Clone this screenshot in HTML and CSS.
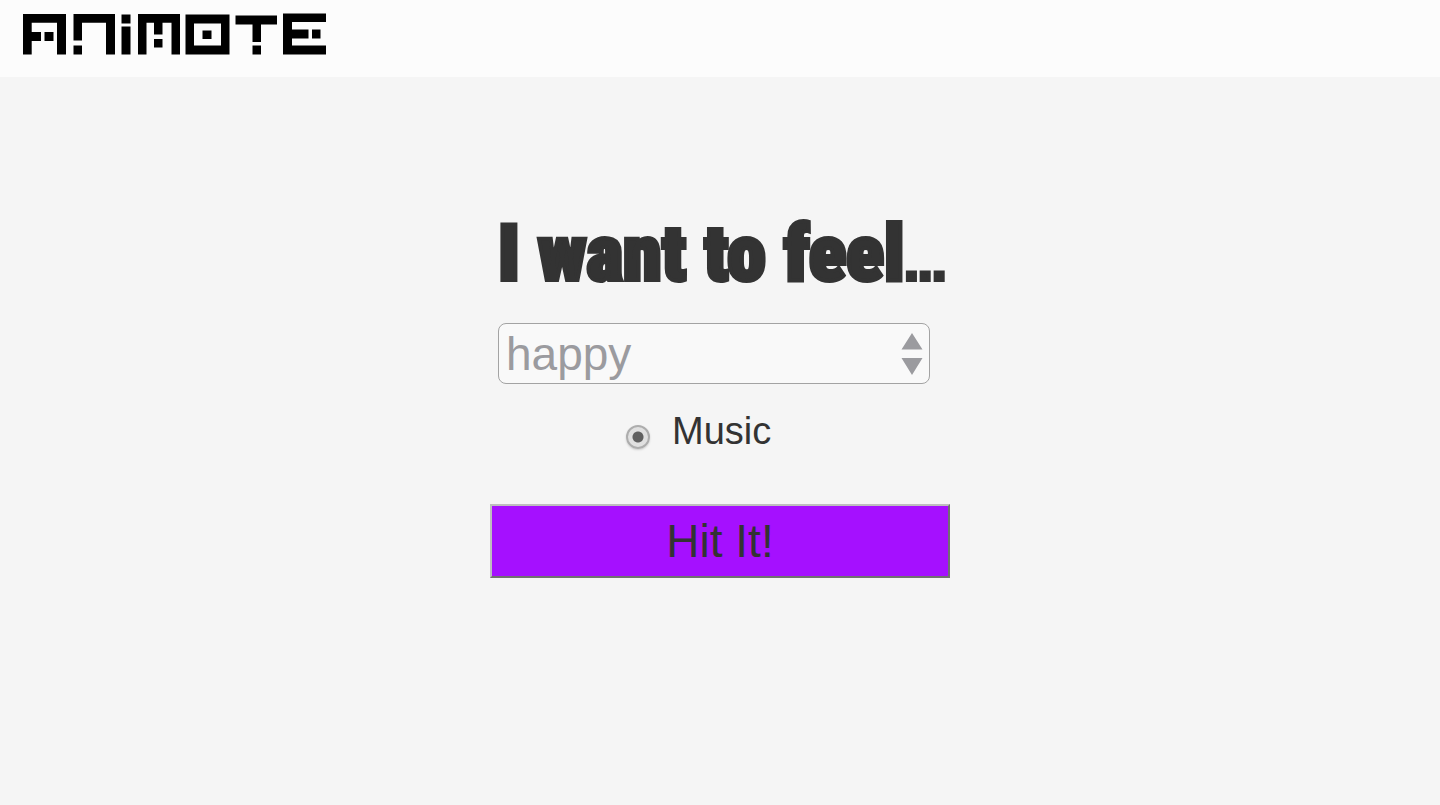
FILE: index.html
```html
<!DOCTYPE html>
<html lang="en">
<head>
<meta charset="utf-8">
<meta name="viewport" content="width=device-width, initial-scale=1">
<title>Animote</title>
<link rel="stylesheet" href="styles.css">
</head>
<body>
<header class="topbar">
  <svg class="logo" viewBox="22 13 305 42" role="img" aria-label="Animote">
    <path fill-rule="evenodd" d="M23 14H66V54.5H57V22.7H31.7V32H41V41H31.7V54.5H23ZM44.5 32h9v9h-9Z
      M73.5 14H115V54.5H106V22.7H82V40.5H73.5ZM73.5 45.5h8.5v9h-8.5Z
      M121.500 14.500h9v9h-9ZM121.500 26.500h9v28h-9Z
      M138 14H180V54.5H171.500V22.700H162.500V34.500H154V22.700H146.500V54.500H138ZM154 39h8.500v8.500h-8.500Z
      M185.500 14.500H229.500V54.500H185.500ZM194 23.500V45.500H221V23.500ZM202.500 30.500h9v8.500h-9Z
      M235.500 15.500H277V24.500H261V42H252.500V24.500H235.500ZM252.500 45.500h8.500v9h-8.500Z
      M283 13.500H326V22H292V29.500H308.500V38.500H292V45.500H326V54.500H283ZM312 29.500h8.500v9h-8.500Z"/>
  </svg>
</header>
<main class="content">
  <form class="mood-form">
    <h1 class="title"><label for="mood">I want to feel<span class="dots">...</span></label></h1>
    <div class="select-wrap">
      <select id="mood" class="mood-select">
        <option>happy</option>
      </select>
      <svg class="arrows" viewBox="0 0 22 42" aria-hidden="true"><path d="M11 0L21.500 16.500H.500ZM.500 25H21.500L11 42Z"/></svg>
    </div>
    <div class="choice">
      <input class="radio" type="radio" id="music" name="kind" checked>
      <label for="music">Music</label>
    </div>
    <button class="submit" type="button">Hit It!</button>
  </form>
</main>
</body>
</html>
```
FILE: styles.css
```css
* {
  box-sizing: border-box;
}

body {
  margin: 0;
  min-height: 100vh;
  background: #f5f5f5;
  color: #333;
  font-family: "Helvetica Neue", "Liberation Sans", Arial, sans-serif;
}

.topbar {
  padding: 13px 22px 22px;
  background: #fcfcfc;
}

.logo {
  display: block;
  width: 305px;
  height: 42px;
}

.content {
  display: flex;
  justify-content: center;
  padding: 129px 16px 48px;
}

.mood-form {
  display: flex;
  flex-direction: column;
  width: 460px;
}

.title {
  margin: 0 0 21px;
  padding-left: 8px;
  font: 900 78px/96px "Roboto Condensed", Impact, sans-serif;
  white-space: nowrap;
  -webkit-text-stroke: 4px #333;
}

.dots {
  font: bold 50px/50px "Liberation Sans", Arial, sans-serif;
}

.select-wrap {
  position: relative;
  margin: 0 20px 0 8px;
}

.mood-select {
  display: block;
  width: 100%;
  height: 61px;
  padding: 0 48px 0 7px;
  border: 1px solid #a3a3a3;
  border-radius: 8px;
  background: #f9f9f9;
  color: #9b9b9f;
  font: 46px/58px "Helvetica Neue", "Liberation Sans", Arial, sans-serif;
  appearance: none;
}

.arrows {
  position: absolute;
  top: 10px;
  right: 7px;
  width: 22px;
  height: 42px;
  fill: #9b9b9f;
  pointer-events: none;
}

.choice {
  display: flex;
  align-items: center;
  gap: 22px;
  margin: 23px 0 49px 136px;
  font-size: 38px;
  line-height: 48px;
}

.radio {
  width: 24px;
  height: 24px;
  margin: 12px 0 0;
  border: 2px solid #adadad;
  border-radius: 50%;
  background: radial-gradient(circle, #606060 5px, #e0e0e0 6px);
  box-shadow: 0 1px 2px #ccc;
  appearance: none;
}

.submit {
  height: 74px;
  padding: 0;
  border: 2px solid;
  border-color: #bebebe #707070 #707070 #bebebe;
  background: #a510ff;
  color: #333;
  font: 46px/70px "Helvetica Neue", "Liberation Sans", Arial, sans-serif;
}
```
